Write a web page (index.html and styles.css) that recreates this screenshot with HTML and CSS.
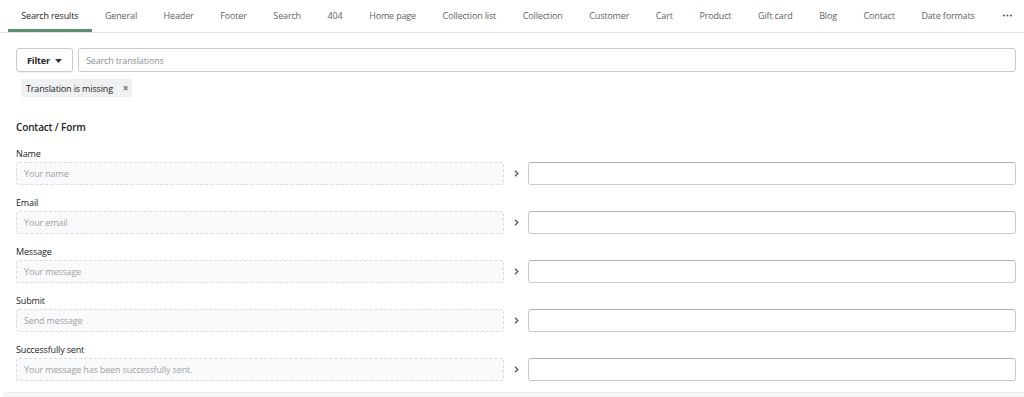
FILE: index.html
```html
<!DOCTYPE html>
<html lang="en">
<head>
<meta charset="utf-8">
<title>Translations</title>
<link rel="stylesheet" href="styles.css">
</head>
<body>
<nav class="tabs">
  <a class="tab active">Search results</a>
  <a class="tab">General</a>
  <a class="tab">Header</a>
  <a class="tab">Footer</a>
  <a class="tab">Search</a>
  <a class="tab">404</a>
  <a class="tab">Home page</a>
  <a class="tab">Collection list</a>
  <a class="tab">Collection</a>
  <a class="tab">Customer</a>
  <a class="tab">Cart</a>
  <a class="tab">Product</a>
  <a class="tab">Gift card</a>
  <a class="tab">Blog</a>
  <a class="tab">Contact</a>
  <a class="tab">Date formats</a>
  <a class="tab more"><svg width="9" height="3" viewBox="0 0 9 3"><circle cx="1" cy="1.5" r="1" fill="#555"/><circle cx="4.5" cy="1.5" r="1" fill="#555"/><circle cx="8" cy="1.5" r="1" fill="#555"/></svg></a>
</nav>

<main class="content">
  <div class="toolbar">
    <button class="filter-btn">Filter <svg class="caret" width="7" height="4" viewBox="0 0 7 4"><path d="M0 0h7L3.5 4z" fill="#333"/></svg></button>
    <div class="search">Search translations</div>
  </div>

  <div class="tags">
    <span class="tag"><span class="tag-label">Translation is missing</span><span class="tag-x">×</span></span>
  </div>

  <h2 class="section-title">Contact / Form</h2>

  <div class="field">
    <div class="label">Name</div>
    <div class="row">
      <div class="source">Your name</div>
      <div class="chev"><svg width="5" height="7" viewBox="0 0 5 7"><path d="M1 0.8L3.8 3.5 1 6.2" fill="none" stroke="#555" stroke-width="1.3"/></svg></div>
      <div class="target"></div>
    </div>
  </div>
  <div class="field">
    <div class="label">Email</div>
    <div class="row">
      <div class="source">Your email</div>
      <div class="chev"><svg width="5" height="7" viewBox="0 0 5 7"><path d="M1 0.8L3.8 3.5 1 6.2" fill="none" stroke="#555" stroke-width="1.3"/></svg></div>
      <div class="target"></div>
    </div>
  </div>
  <div class="field">
    <div class="label">Message</div>
    <div class="row">
      <div class="source">Your message</div>
      <div class="chev"><svg width="5" height="7" viewBox="0 0 5 7"><path d="M1 0.8L3.8 3.5 1 6.2" fill="none" stroke="#555" stroke-width="1.3"/></svg></div>
      <div class="target"></div>
    </div>
  </div>
  <div class="field">
    <div class="label">Submit</div>
    <div class="row">
      <div class="source">Send message</div>
      <div class="chev"><svg width="5" height="7" viewBox="0 0 5 7"><path d="M1 0.8L3.8 3.5 1 6.2" fill="none" stroke="#555" stroke-width="1.3"/></svg></div>
      <div class="target"></div>
    </div>
  </div>
  <div class="field">
    <div class="label">Successfully sent</div>
    <div class="row">
      <div class="source">Your message has been successfully sent.</div>
      <div class="chev"><svg width="5" height="7" viewBox="0 0 5 7"><path d="M1 0.8L3.8 3.5 1 6.2" fill="none" stroke="#555" stroke-width="1.3"/></svg></div>
      <div class="target"></div>
    </div>
  </div>
</main>
<div class="footer-band"></div>
</body>
</html>
```

FILE: styles.css
```css
* { box-sizing: border-box; }
html, body { margin: 0; padding: 0; background: #fff; }
body {
  font-family: "Open Sans", "Noto Sans", sans-serif;
  font-size: 9px;
  letter-spacing: -0.15px;
  color: #222426;
  overflow: hidden;
}

.tabs {
  display: flex;
  height: 33px;
  padding: 0 8px;
  border-bottom: 1px solid #e1e3e5;
}
.tab {
  display: flex;
  align-items: center;
  height: 32px;
  padding: 1px 13.3px 0;
  color: #5f6266;
  white-space: nowrap;
  border-bottom: 3px solid transparent;
}
.tab.active {
  color: #222426;
  border-bottom-color: #5a8f72;
}
.tab.more { padding-left: 15px; }

.content { padding: 0 8px 0 16px; }

.toolbar {
  display: flex;
  gap: 5px;
  margin-top: 15px;
  width: 1000px;
}
.filter-btn {
  display: flex;
  align-items: center;
  justify-content: center;
  gap: 5px;
  width: 57px;
  height: 24px;
  border: 1px solid #c9cccf;
  border-radius: 3px;
  background: #fff;
  font-family: inherit;
  font-size: 9px;
  letter-spacing: -0.15px;
  font-weight: 700;
  color: #222426;
  padding: 0;
  box-shadow: 0 1px 0 rgba(22,29,37,0.05);
}
.caret { margin-top: 1px; }
.search {
  flex: 1;
  height: 24px;
  display: flex;
  align-items: center;
  padding-left: 7px;
  border: 1px solid #c9cccf;
  border-radius: 3px;
  color: #8c9196;
}

.tags { margin-top: 7px; padding-left: 5px; }
.tag {
  display: inline-flex;
  align-items: stretch;
  height: 18px;
  background: #eef0f1;
  border-radius: 2px;
}
.tag-label {
  display: flex;
  align-items: center;
  padding: 0 5px;
  color: #222426;
}
.tag-x {
  display: flex;
  align-items: center;
  justify-content: center;
  width: 14px;
  border-left: 1px solid #fff;
  color: #6d7175;
  font-weight: 700;
  font-size: 10px;
}

.section-title {
  margin: 23px 0 13px;
  font-size: 10px;
  line-height: 14px;
  font-weight: 600;
  color: #222426;
}

.field { margin-bottom: 11px; width: 1000px; }
.label {
  line-height: 12px;
  margin-bottom: 3px;
  padding-top: 1px;
  height: 12px;
  color: #222426;
}
.row {
  display: grid;
  grid-template-columns: 1fr 24px 1fr;
  height: 23px;
}
.source {
  display: flex;
  align-items: center;
  padding-left: 7px;
  background: #f9fafb;
  border: 1px dashed #d9dde1;
  border-radius: 3px;
  color: #9ea3a8;
}
.chev {
  display: flex;
  align-items: center;
  justify-content: center;
}
.target {
  border: 1px solid #c9cccf;
  border-top-color: #aeb4b9;
  border-radius: 3px;
  background: #fff;
}

.footer-band {
  margin: 3px 0 0 3px;
  height: 10px;
  background: #f4f6f8;
  border-top: 1px solid #eceef0;
}
```
